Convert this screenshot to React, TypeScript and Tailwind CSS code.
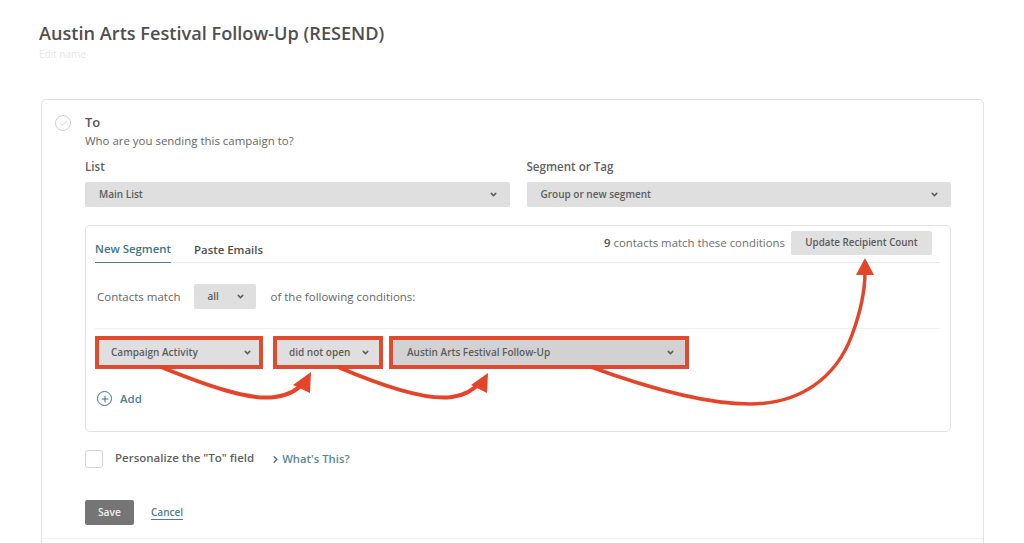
import { ChevronDown, ChevronRight, Check, Plus } from "lucide-react";
import { PropsWithChildren } from "react";

const font = { fontFamily: '"Open Sans", sans-serif' };

export default function App() {
  return (
    <div
      className="relative h-[543px] w-[1024px] overflow-hidden bg-white text-[#5f5f5f]"
      style={font}
    >
      <header className="pl-[39px] pt-[20px]">
        <h1 className="text-[18.15px] leading-[27px] font-semibold text-[#4f4f4f]">
          Austin Arts Festival Follow-Up (RESEND)
        </h1>
        <p className="text-[10px] leading-[14px] text-[#e6e6e6]">Edit name</p>
      </header>

      <section className="mt-[38px] ml-[41px] h-[460px] w-[943px] rounded-[5px] border border-[#e2e2e2]">
        <div className="flex items-start pt-[13px] pl-[13px]">
          <span className="mt-[2px] flex h-[16px] w-[16px] items-center justify-center rounded-full border border-[#cfcfcf] text-[#cfcfcf]">
            <Check size={9} strokeWidth={2} />
          </span>
          <div className="ml-[14px]">
            <h2 className="text-[13px] leading-[18px] font-semibold text-[#555]">To</h2>
            <p className="mt-[1px] text-[11.45px] leading-[18px] text-[#666]">
              Who are you sending this campaign to?
            </p>
          </div>
        </div>

        <div className="pr-[32px] pl-[43px]">
          <div className="mt-[8px] flex gap-[17px]">
            <Field label="List" value="Main List" />
            <Field label="Segment or Tag" value="Group or new segment" />
          </div>

          <div className="mt-[18px] h-[207px] rounded-[5px] border border-[#e2e2e2] pr-[10px] pl-[9px]">
            <div className="flex h-[37px] items-start border-b border-[#ebebeb]">
              <div className="flex h-[37px] items-center border-b border-[#4d7a8c] pt-[10px] text-[11.4px] font-semibold text-[#3f7486]">
                New Segment
              </div>
              <div className="ml-[23px] flex h-[37px] items-center pt-[10px] text-[11.4px] font-semibold text-[#4f4f4f]">
                Paste Emails
              </div>
              <div className="ml-auto flex items-center pt-[5px] pr-[8px]">
                <span className="text-[11.4px] text-[#6e6e6e]">
                  <b className="font-semibold text-[#555]">9</b> contacts match these conditions
                </span>
                <button className="ml-[6px] h-[24px] w-[141px] rounded-[2px] bg-[#e0e0e0] text-[9.8px] font-semibold text-[#5a5a5a]">
                  Update Recipient Count
                </button>
              </div>
            </div>

            <div className="mt-[21px] flex items-center pl-[2px] text-[11.5px] text-[#666]">
              <span>Contacts match</span>
              <Select className="mx-[14px] h-[25px] w-[62px] pr-[11px] pl-[13px]" value="all" />
              <span>of the following conditions:</span>
            </div>

            <div className="mt-[19px] flex gap-[10px] border-t border-[#f0f0f0] pt-[7px]">
              <Marked className="w-[168px]">
                <Select className="h-full w-full pr-[7px] pl-[12px]" value="Campaign Activity" />
              </Marked>
              <Marked className="w-[110px]">
                <Select className="h-full w-full pr-[9px] pl-[12px]" value="did not open" />
              </Marked>
              <div className="-ml-[4px]">
                <Marked className="w-[300px]">
                  <Select
                    className="h-full w-full !bg-[#d2d2d2] pr-[10px] pl-[14px]"
                    value="Austin Arts Festival Follow-Up"
                  />
                </Marked>
              </div>
            </div>

            <div className="mt-[21px] flex items-center gap-[8px] pl-[2px] text-[11.5px] font-semibold text-[#4d7f8f]">
              <span className="flex h-[15px] w-[15px] items-center justify-center rounded-full border-[1.5px] border-[#3f7486] text-[#3f7486]">
                <Plus size={10} strokeWidth={2.5} />
              </span>
              Add
            </div>
          </div>

          <div className="mt-[17px] flex items-center">
            <span className="h-[18px] w-[18px] rounded-[3px] border-[1.5px] border-[#d4d4d4] bg-white" />
            <span className="mb-[2px] ml-[12px] text-[11.5px] font-semibold text-[#5f5f5f]">
              Personalize the "To" field
            </span>
            <span className="mt-[2px] ml-[16px] flex items-center text-[11.3px] font-semibold text-[#5d8696]">
              <ChevronRight size={11} strokeWidth={3} className="mr-[1px] text-[#3f7486]" />
              What's This?
            </span>
          </div>

          <div className="mt-[32px] flex items-center">
            <button className="h-[25px] w-[49px] rounded-[2px] bg-[#757575] text-[10.3px] font-semibold text-[#eeeeee]">
              Save
            </button>
            <a className="ml-[17px] border-b border-[#4d7f8f] text-[10px] leading-[13px] font-semibold text-[#4d7f8f]">
              Cancel
            </a>
          </div>
        </div>

        <div className="mt-[13px] border-t border-[#f2f2f2]" />
      </section>

      <Arrows />
    </div>
  );
}

function Field({ label, value }: { label: string; value: string }) {
  return (
    <div className="min-w-0 flex-1">
      <label className="block text-[11.6px] leading-[17px] font-semibold text-[#5f5f5f]">
        {label}
      </label>
      <Select className="mt-[7px] h-[25px] w-full pr-[12px] pl-[14px]" value={value} />
    </div>
  );
}

function Select({ value, className }: { value: string; className: string }) {
  return (
    <div
      className={`flex items-center justify-between rounded-[2px] bg-[#dfdfdf] text-[10px] font-semibold text-[#5c5c5c] ${className}`}
    >
      <span className="whitespace-nowrap">{value}</span>
      <ChevronDown size={9} strokeWidth={4} className="shrink-0 text-[#5c5c5c]" />
    </div>
  );
}

function Marked({ className, children }: PropsWithChildren & { className: string }) {
  return (
    <div className={`h-[33px] border-[4px] border-[#e04a2f] ${className}`}>{children}</div>
  );
}

// hand-drawn annotation arrows sitting on top of the form
function Arrows() {
  const red = "#e3452a";
  return (
    <svg className="pointer-events-none absolute top-0 left-0" width="1024" height="543" fill="none">
      <path d="M161 367C205 385 250 401 275 397C290 395 298 390 304 382" stroke={red} strokeWidth="4" />
      <path d="M311 372L310 393L293 385Z" fill={red} />
      <path d="M338 367C380 385 425 401 452 397C466 395 474 390 480 382" stroke={red} strokeWidth="4" />
      <path d="M488 373L487 393L471 385Z" fill={red} />
      <path d="M591 367C640 385 700 404 750 404C800 404 836 378 852 335C862 308 865 285 865 272" stroke={red} strokeWidth="3.5" />
      <path d="M865 258L874 275L856 275Z" fill={red} />
    </svg>
  );
}
